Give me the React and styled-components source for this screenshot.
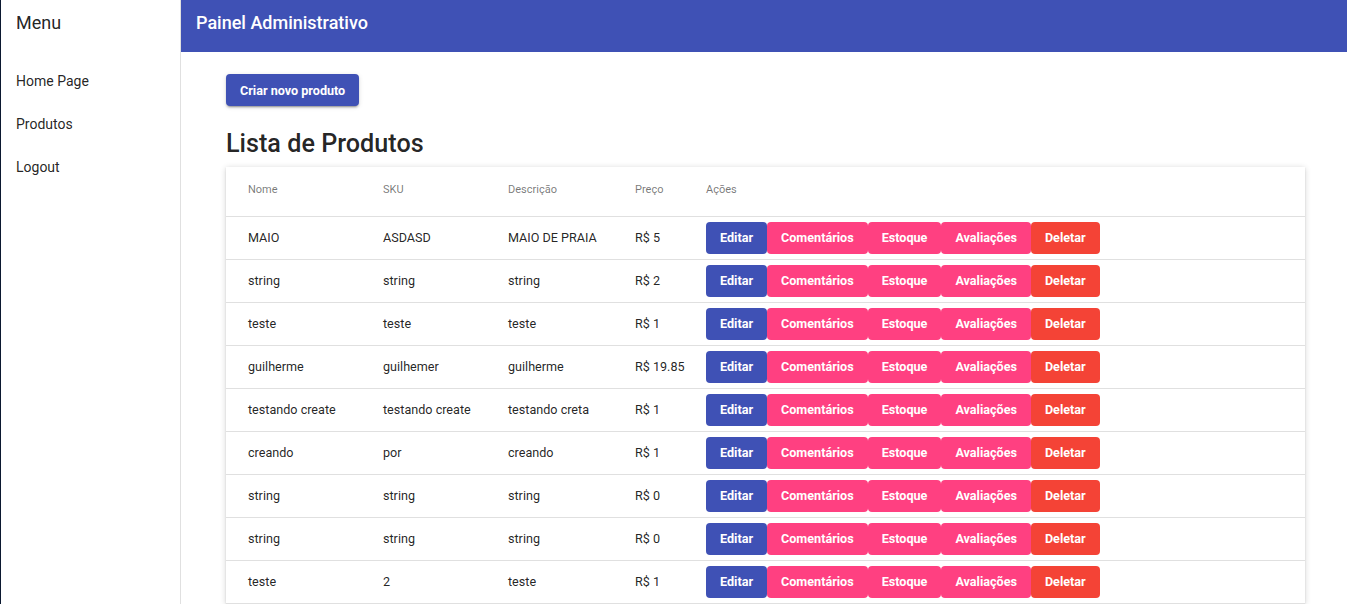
import React from "react";
import styled, { createGlobalStyle } from "styled-components";

const Global = createGlobalStyle`
  html, body { margin: 0; padding: 0; background: #fff; }
  body { font-family: Roboto, "Noto Sans", Arial, sans-serif; color: rgba(0,0,0,0.87); }
  * { box-sizing: border-box; }
`;

const Layout = styled.div`
  display: flex;
  min-height: 604px;
  border-left: 1px solid #0b1830;
`;

const Sidebar = styled.aside`
  width: 180px;
  flex-shrink: 0;
  border-right: 1px solid #e0e0e0;
  background: #fff;
  min-height: 604px;
`;

const MenuTitle = styled.div`
  height: 44px;
  padding: 12px 0 0 15px;
  font-size: 18px;
  font-weight: 400;
  color: rgba(0,0,0,0.87);
`;

const MenuList = styled.nav`
  display: flex;
  flex-direction: column;
  padding-top: 16px;
`;

const MenuItem = styled.a`
  display: block;
  height: 43px;
  padding: 0 0 0 15px;
  font-size: 14px;
  line-height: 43px;
  color: rgba(0,0,0,0.87);
  text-decoration: none;
`;

const Main = styled.div`
  flex: 1;
  min-width: 0;
`;

const TopBar = styled.header`
  height: 52px;
  background: #3f51b5;
  color: #fff;
  display: flex;
  align-items: center;
  padding: 0 0 8px 15px;
  font-size: 18px;
  font-weight: 500;
`;

const Content = styled.main`
  padding: 22px 42px 0 45px;
`;

const Button = styled.button`
  border: none;
  border-radius: 4px;
  height: 32px;
  padding: 0 14px;
  font-family: Roboto, Arial, sans-serif;
  font-size: 12.6px;
  font-weight: 700;
  color: #fff;
  cursor: pointer;
  background: ${p => p.$color};
  white-space: nowrap;
`;

const CreateButton = styled(Button)`
  background: #3f51b5;
  box-shadow: 0 3px 1px -2px rgba(0,0,0,0.2), 0 2px 2px 0 rgba(0,0,0,0.14), 0 1px 5px 0 rgba(0,0,0,0.12);
`;

const Title = styled.h1`
  margin: 21px 0 7px;
  font-size: 25.2px;
  font-weight: 500;
  line-height: 33px;
  color: rgba(0,0,0,0.87);
`;

const Card = styled.div`
  background: #fff;
  box-shadow: 0 2px 1px -1px rgba(0,0,0,0.2), 0 1px 1px 0 rgba(0,0,0,0.14), 0 1px 6px 0 rgba(0,0,0,0.18);
`;

const Table = styled.table`
  width: 100%;
  border-collapse: collapse;
  table-layout: fixed;
`;

const Th = styled.th`
  height: 49px;
  text-align: left;
  font-size: 11px;
  font-weight: 400;
  color: rgba(0,0,0,0.54);
  padding: 0 0 3px 22px;
  border-bottom: 1px solid #e0e0e0;
  width: ${p => p.$w || "auto"};
`;

const Td = styled.td`
  height: 43px;
  font-size: 12.6px;
  padding: 0 0 0 22px;
  border-bottom: 1px solid #e0e0e0;
  white-space: nowrap;
`;

const Actions = styled.div`
  display: flex;
  align-items: center;
`;

const products = [
  ["MAIO", "ASDASD", "MAIO DE PRAIA", "R$ 5"],
  ["string", "string", "string", "R$ 2"],
  ["teste", "teste", "teste", "R$ 1"],
  ["guilherme", "guilhemer", "guilherme", "R$ 19.85"],
  ["testando create", "testando create", "testando creta", "R$ 1"],
  ["creando", "por", "creando", "R$ 1"],
  ["string", "string", "string", "R$ 0"],
  ["string", "string", "string", "R$ 0"],
  ["teste", "2", "teste", "R$ 1"],
];

const actions = [
  ["Editar", "#3f51b5"],
  ["Comentários", "#ff4081"],
  ["Estoque", "#ff4081"],
  ["Avaliações", "#ff4081"],
  ["Deletar", "#f44336"],
];

export default function App() {
  return (
    <>
      <Global />
      <Layout>
        <Sidebar>
          <MenuTitle>Menu</MenuTitle>
          <MenuList>
            <MenuItem href="#">Home Page</MenuItem>
            <MenuItem href="#">Produtos</MenuItem>
            <MenuItem href="#">Logout</MenuItem>
          </MenuList>
        </Sidebar>
        <Main>
          <TopBar>Painel Administrativo</TopBar>
          <Content>
            <CreateButton>Criar novo produto</CreateButton>
            <Title>Lista de Produtos</Title>
            <Card>
              <Table>
                <thead>
                  <tr>
                    <Th $w="135px">Nome</Th>
                    <Th $w="125px">SKU</Th>
                    <Th $w="127px">Descrição</Th>
                    <Th $w="71px">Preço</Th>
                    <Th>Ações</Th>
                  </tr>
                </thead>
                <tbody>
                  {products.map((p, i) => (
                    <tr key={i}>
                      {p.map((c, j) => <Td key={j}>{c}</Td>)}
                      <Td>
                        <Actions>
                          {actions.map(([label, color]) => (
                            <Button key={label} $color={color}>{label}</Button>
                          ))}
                        </Actions>
                      </Td>
                    </tr>
                  ))}
                </tbody>
              </Table>
            </Card>
          </Content>
        </Main>
      </Layout>
    </>
  );
}
